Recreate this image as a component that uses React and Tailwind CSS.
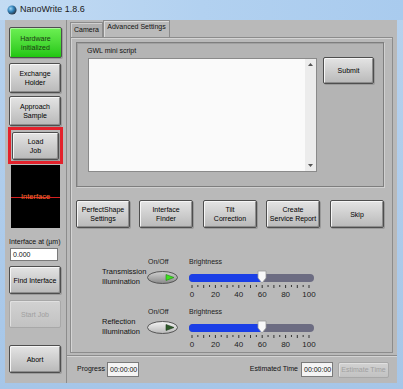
import React from "react";

const F = { fontFamily: '"Liberation Sans", Arial, sans-serif' };

function Btn({ children, className = "", disabled = false }) {
  return (
    <div
      className={
        "flex items-center justify-center text-center text-[7px] leading-[9px] whitespace-nowrap rounded-[2px] border " +
        (disabled
          ? "border-[#a8a8a8] bg-linear-to-b from-[#d2d2d2] to-[#c2c2c2] text-[#a0a0a0] shadow-[inset_1px_1px_0_#e0e0e0]"
          : "border-[#4e4e4e] bg-linear-to-b from-[#e4e4e4] to-[#b9b9b9] text-black shadow-[inset_1px_1px_0_#f6f6f6,inset_-1px_-1px_0_#8c8c8c,1px_1px_0_#9a9a9a]") +
        " " +
        className
      }
    >
      {children}
    </div>
  );
}

function Toggle({ on }) {
  return (
    <svg width="31" height="13" viewBox="0 0 31 13">
      <defs>
        <linearGradient id={on ? "tg1" : "tg2"} x1="0" y1="0" x2="0" y2="1">
          <stop offset="0" stopColor={on ? "#d0d0d0" : "#f4f4f4"} />
          <stop offset="1" stopColor={on ? "#8a8a8a" : "#b8b8b8"} />
        </linearGradient>
      </defs>
      <ellipse cx="15.5" cy="6.5" rx="15" ry="6" fill={`url(#${on ? "tg1" : "tg2"})`} stroke="#555" strokeWidth="1" />
      <path d="M19 3.5 L27 6.5 L19 9.5 Z" fill={on ? "#3ee01e" : "#2e5a2a"} stroke={on ? "#1c8a10" : "#1e3a1c"} strokeWidth="0.6" />
    </svg>
  );
}

function Slider() {
  const labels = [0, 20, 40, 60, 80, 100];
  const w = 125;
  return (
    <div className="relative w-[132px]">
      <div className="relative h-[8px] w-[125px] rounded-[4px] bg-[#6c6c82] overflow-hidden">
        <div className="absolute left-0 top-0 h-full w-[73px] bg-[#1a3ee6]" />
      </div>
      <svg className="absolute left-[68px] top-[-4px]" width="10" height="14" viewBox="0 0 10 14">
        <path d="M1 1 H9 V8 L5 13 L1 8 Z" fill="#f8f8f8" stroke="#9a9a9a" strokeWidth="0.8" />
      </svg>
      <svg className="block mt-[3px]" width="130" height="5" viewBox="0 0 130 5">
        {Array.from({ length: 21 }).map((_, i) => {
          const x = 3 + (i * (w - 8)) / 20;
          return <line key={i} x1={x} x2={x} y1={0} y2={i % 2 === 0 ? 3 : 2} stroke="#333" strokeWidth="1" />;
        })}
      </svg>
      <div className="relative h-[10px] text-[8px] leading-[10px] text-[#222]">
        {labels.map((l, i) => (
          <span
            key={l}
            className="absolute top-0 -translate-x-1/2"
            style={{ left: 3 + (i * (w - 8)) / 5 }}
          >
            {l}
          </span>
        ))}
      </div>
    </div>
  );
}

function Illum({ label1, label2, on }) {
  return (
    <div className="flex items-start">
      <div className="w-[45px] mt-[10px] text-[7.5px] leading-[10px] text-[#111] whitespace-nowrap">
        <div>{label1}</div>
        <div>{label2}</div>
      </div>
      <div className="w-[42px] flex flex-col">
        <div className="text-[7px] leading-[9px] text-[#222] ml-[1px]">On/Off</div>
        <div className="mt-[5px]">
          <Toggle on={on} />
        </div>
      </div>
      <div className="flex flex-col">
        <div className="text-[7px] leading-[9px] text-[#222]">Brightness</div>
        <div className="mt-[8px]">
          <Slider />
        </div>
      </div>
    </div>
  );
}

export default function App() {
  return (
    <div
      className="relative w-[403px] h-[389px] overflow-hidden flex flex-col bg-linear-to-b from-[#b7d2ee] to-[#a6c6e8]"
      style={F}
    >
      {/* Title bar */}
      <div className="h-[20px] flex items-center pl-[7px] bg-linear-to-r from-[#c3dbf3] via-[#b2d1f0] to-[#a9cbee]">
        <svg width="10" height="10" viewBox="0 0 11 11" className="mr-[3px]">
          <defs>
            <radialGradient id="ic" cx="0.35" cy="0.35" r="0.7">
              <stop offset="0" stopColor="#9fd6f5" />
              <stop offset="0.5" stopColor="#2f7fb8" />
              <stop offset="1" stopColor="#2b3340" />
            </radialGradient>
          </defs>
          <circle cx="5.5" cy="5.5" r="5" fill="url(#ic)" />
        </svg>
        <span className="text-[9px] text-[#1a1a1a]">NanoWrite 1.8.6</span>
      </div>

      {/* Body */}
      <div className="ml-[5px] mr-[6px] h-[363px] bg-[#b9b9b9] flex">
        {/* Left panel */}
        <div className="w-[62px] border-r border-[#8c8c8c] flex flex-col pl-[4px] pt-[7px]">
          <div className="w-[53px] h-[31px] flex items-center justify-center text-center text-[7px] leading-[9px] text-[#1c3a14] rounded-[2px] border border-[#4e4e4e] bg-linear-to-b from-[#6bf052] to-[#1ec70e] shadow-[inset_1px_1px_0_#a8f79a,1px_1px_0_#9a9a9a]">
            Hardware
            <br />
            initialized
          </div>
          <Btn className="w-[52px] h-[30px] mt-[5px]">
            Exchange
            <br />
            Holder
          </Btn>
          <Btn className="w-[52px] h-[30px] mt-[3px]">
            Approach
            <br />
            Sample
          </Btn>
          <div className="w-[55px] h-[37px] -ml-[1px] mt-[1px] border-[3px] border-[#e3222c] flex items-center justify-center">
            <Btn className="w-[47px] h-[28px]">
              Load
              <br />
              Job
            </Btn>
          </div>
          <div className="relative w-[49px] h-[63px] ml-[2px] mt-[1px] bg-black flex items-center justify-center">
            <div className="absolute left-0 right-0 top-[32px] h-[1px] bg-[#d42020]" />
            <span className="relative text-[7.5px] text-[#ff6a30]">Interface</span>
          </div>
          <div className="mt-[9px] text-[7px] leading-[9px] text-[#111] whitespace-nowrap">Interface at (µm)</div>
          <div className="mt-[2px] ml-[1px] w-[48px] h-[13px] bg-white border border-[#7a7a7a] text-[7px] leading-[11px] pl-[2px] text-[#111]">
            0.000
          </div>
          <Btn className="w-[52px] h-[28px] mt-[5px]">Find Interface</Btn>
          <Btn className="w-[52px] h-[28px] mt-[6px]" disabled>
            Start Job
          </Btn>
          <Btn className="w-[52px] h-[28px] mt-[17px]">Abort</Btn>
        </div>

        {/* Main */}
        <div className="flex-1 flex flex-col">
          {/* Tabs */}
          <div className="h-[17px] flex items-end pl-[3px]">
            <div className="h-[15px] w-[33px] border border-b-0 border-[#8c8c8c] bg-[#b0b0b0] text-[7px] leading-[14px] text-center text-[#111] shadow-[inset_1px_1px_0_#cfcfcf] whitespace-nowrap">
              Camera
            </div>
            <div className="h-[17px] w-[67px] border border-b-0 border-[#8c8c8c] bg-[#bababa] text-[7px] leading-[12px] text-center text-[#111] shadow-[inset_1px_1px_0_#dadada] whitespace-nowrap">
              Advanced Settings
            </div>
          </div>
          {/* Tab panel */}
          <div className="ml-[3px] mr-[4px] h-[316px] border border-[#8c8c8c] shadow-[inset_1px_1px_0_#d4d4d4] bg-[#b9b9b9] pl-[5px] pt-[4px]">
            {/* Group box */}
            <div className="w-[308px] h-[145px] border border-[#7e7e7e] shadow-[inset_1px_1px_0_#a0a0a0,1px_1px_0_#d0d0d0] bg-[#b4b4b4] relative">
              <div className="absolute left-[10px] top-[3px] text-[7px] leading-[9px] text-[#111]">GWL mini script</div>
              <div className="absolute left-[11px] top-[15px] w-[229px] h-[114px] bg-[#fafafa] border border-[#8a8a8a] flex justify-end">
                <div className="w-[11px] h-full bg-[#ececec] flex flex-col items-center justify-between py-[4px]">
                  <svg width="5" height="3" viewBox="0 0 5 3"><path d="M0 3 L2.5 0 L5 3 Z" fill="#555" /></svg>
                  <svg width="5" height="3" viewBox="0 0 5 3"><path d="M0 0 L2.5 3 L5 0 Z" fill="#555" /></svg>
                </div>
              </div>
              <Btn className="absolute left-[246px] top-[14px] w-[51px] h-[27px]">Submit</Btn>
            </div>
            {/* Button row */}
            <div className="flex mt-[13px]">
              <Btn className="w-[54px] h-[28px]">
                PerfectShape
                <br />
                Settings
              </Btn>
              <Btn className="w-[54px] h-[28px] ml-[9px]">
                Interface
                <br />
                Finder
              </Btn>
              <Btn className="w-[54px] h-[28px] ml-[10px]">
                Tilt
                <br />
                Correction
              </Btn>
              <Btn className="w-[54px] h-[28px] ml-[9px]">
                Create
                <br />
                Service Report
              </Btn>
              <Btn className="w-[54px] h-[28px] ml-[10px]">Skip</Btn>
            </div>
            {/* Illumination */}
            <div className="ml-[26px] mt-[29px] flex flex-col">
              <Illum label1="Transmission" label2="Illumination" on />
              <div className="mt-[7px]">
                <Illum label1="Reflection" label2="Illumination" on={false} />
              </div>
            </div>
          </div>
          {/* Status bar */}
          <div className="mt-[2px] flex-1 border-t border-[#8c8c8c] shadow-[inset_0_1px_0_#d4d4d4] flex items-center pl-[10px] pr-[8px]">
            <span className="text-[7px] text-[#111]">Progress</span>
            <div className="ml-[2px] w-[32px] h-[15px] bg-[#f4f4f4] border border-[#7a7a7a] text-[7px] leading-[13px] pl-[2px] text-[#111]">
              00:00:00
            </div>
            <div className="flex-1" />
            <span className="text-[7px] text-[#111]">Estimated Time</span>
            <div className="ml-[3px] w-[32px] h-[15px] bg-[#f4f4f4] border border-[#7a7a7a] text-[7px] leading-[13px] pl-[2px] text-[#111]">
              00:00:00
            </div>
            <Btn className="ml-[5px] w-[51px] h-[16px]" disabled>
              Estimate Time
            </Btn>
          </div>
        </div>
      </div>
    </div>
  );
}
